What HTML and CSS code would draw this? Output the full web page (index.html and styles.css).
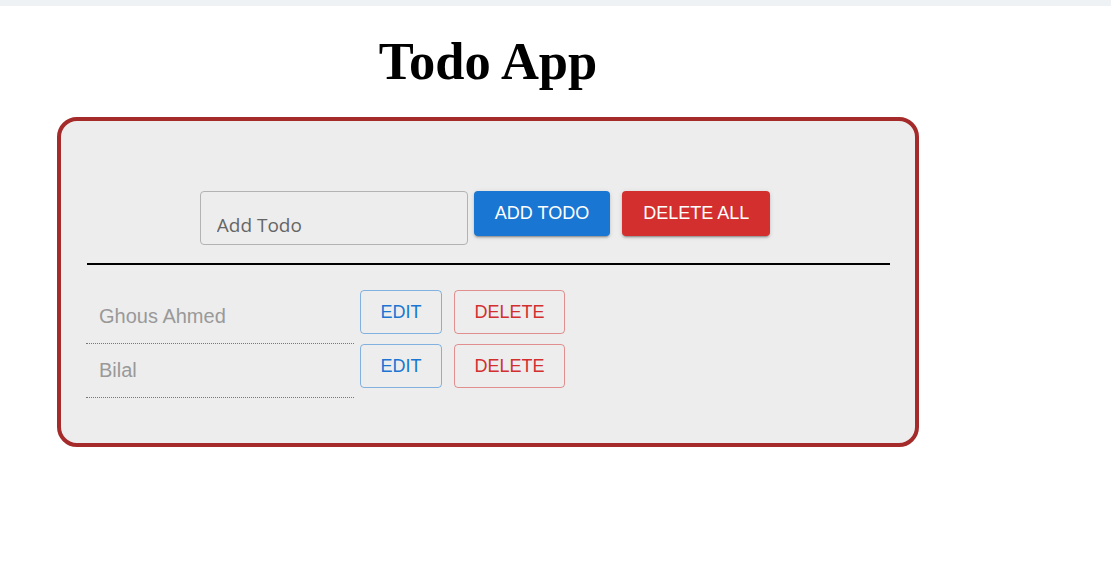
FILE: index.html
```html
<!DOCTYPE html>
<html>
<head>
<meta charset="utf-8">
<title>Todo App</title>
<link rel="stylesheet" href="styles.css">
</head>
<body>
<div class="topbar"></div>
<div class="app">
  <h1 class="title">Todo App</h1>
  <div class="card">
    <div class="form-row">
      <input class="todo-input" type="text" placeholder="Add Todo">
      <button class="btn btn-contained btn-blue">ADD TODO</button>
      <button class="btn btn-contained btn-red">DELETE ALL</button>
    </div>
    <div class="divider"></div>
    <div class="list">
      <div class="row">
        <input class="item-input" type="text" value="Ghous Ahmed" readonly>
        <button class="btn btn-outlined btn-o-blue">EDIT</button>
        <button class="btn btn-outlined btn-o-red">DELETE</button>
      </div>
      <div class="row">
        <input class="item-input" type="text" value="Bilal" readonly>
        <button class="btn btn-outlined btn-o-blue">EDIT</button>
        <button class="btn btn-outlined btn-o-red">DELETE</button>
      </div>
    </div>
  </div>
</div>
</body>
</html>
```

FILE: styles.css
```css
* { box-sizing: border-box; }
html, body { margin: 0; padding: 0; background: #ffffff; }
.topbar { height: 6px; background: #eef2f5; }
.app { width: 862px; margin-left: 57px; }
.title {
  margin: 26px 0 27px 0;
  text-align: center;
  font-family: "Liberation Serif", "Times New Roman", serif;
  font-weight: bold;
  font-size: 52.5px;
  line-height: 58px;
  color: #000;
}
.card {
  border: 4px solid #a52a2a;
  border-radius: 20px;
  background: #ededed;
  padding: 70px 25px 45px 25px;
}
.form-row {
  display: flex;
  justify-content: center;
  align-items: flex-start;
  padding-right: 6px;
}
.todo-input {
  width: 268px;
  height: 54px;
  border: 1px solid #b3b3b3;
  border-radius: 4px;
  background: transparent;
  padding: 14px 16px 0 16px;
  font-family: "Open Sans", sans-serif;
  font-size: 19px;
  color: #333;
  outline: none;
}
.todo-input::placeholder { color: #666; opacity: 1; }
.btn {
  font-family: "Liberation Sans", Arial, sans-serif;
  font-size: 18px;
  padding: 0 21px;
  border-radius: 4px;
  cursor: pointer;
  white-space: nowrap;
}
.btn-contained {
  height: 45px;
  border: none;
  color: #fff;
  box-shadow: 0 3px 1px -2px rgba(0,0,0,.2), 0 2px 2px 0 rgba(0,0,0,.14), 0 1px 5px 0 rgba(0,0,0,.12);
}
.btn-blue { background: #1976d2; margin-left: 6px; }
.btn-red { background: #d32f2f; margin-left: 12px; }
.divider {
  height: 2px;
  background: #000;
  margin: 18px 0 25px 1px;
}
.list { display: flex; flex-direction: column; }
.row { display: flex; align-items: flex-start; }
.item-input {
  width: 268px;
  height: 54px;
  border: none;
  border-bottom: 1px dotted #777;
  background: transparent;
  padding: 0 13px;
  font-family: "Liberation Sans", Arial, sans-serif;
  font-size: 20px;
  color: #999;
  outline: none;
}
.btn-outlined {
  height: 44px;
  background: transparent;
  padding: 0 19.5px;
}
.btn-o-blue {
  border: 1px solid rgba(25,118,210,0.5);
  color: #1976d2;
  margin-left: 6px;
}
.btn-o-red {
  border: 1px solid rgba(211,47,47,0.5);
  color: #d32f2f;
  margin-left: 12px;
}
```
